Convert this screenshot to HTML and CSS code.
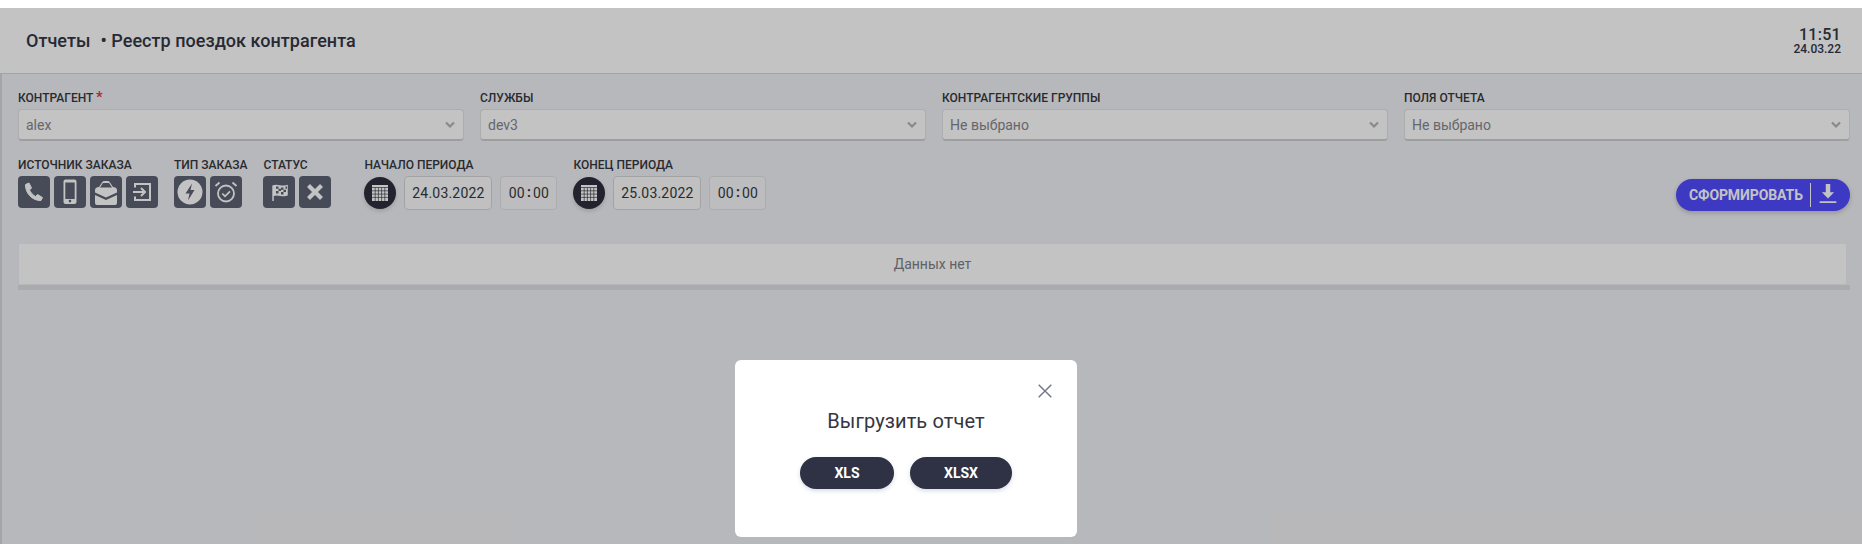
FILE: index.html
```html
<!DOCTYPE html>
<html lang="ru">
<head>
<meta charset="utf-8">
<title>Отчеты</title>
<link rel="stylesheet" href="styles.css">
</head>
<body>
<svg class="defs" width="0" height="0" aria-hidden="true">
  <defs>
    <symbol id="chev" viewBox="0 0 10 8"><path d="M1 1.5 L5 5.5 L9 1.5" fill="none" stroke="currentColor" stroke-width="2.2"/></symbol>
    <symbol id="cal" viewBox="0 0 16 16">
      <path fill="#fff" d="M0 0h16v16H0z"/>
      <path fill="none" stroke="#2d2f3e" stroke-width=".65" d="M3.2 2.500v13.500M6.400 2.500v13.500M9.600 2.500v13.500M12.800 2.500v13.500M0 2.500h16M0 5.800h16M0 9.100h16M0 12.400h16"/>
    </symbol>
  </defs>
</svg>
<div class="app">
  <header class="topbar">
    <h1 class="title"><span class="title-root">Отчеты</span><span class="title-sub">• Реестр поездок контрагента</span></h1>
    <div class="clock"><div class="clock-time">11:51</div><div class="clock-date">24.03.22</div></div>
  </header>
  <main class="main">
    <section class="selects">
      <div class="field"><label class="label">Контрагент <span class="req">*</span></label>
        <div class="select"><span>alex</span><svg class="chev"><use href="#chev"/></svg></div></div>
      <div class="field"><label class="label">Службы</label>
        <div class="select"><span>dev3</span><svg class="chev"><use href="#chev"/></svg></div></div>
      <div class="field"><label class="label">Контрагентские группы</label>
        <div class="select"><span>Не выбрано</span><svg class="chev"><use href="#chev"/></svg></div></div>
      <div class="field"><label class="label">Поля отчета</label>
        <div class="select"><span>Не выбрано</span><svg class="chev"><use href="#chev"/></svg></div></div>
    </section>
    <section class="toolbar">
      <div class="group"><div class="label">Источник заказа</div>
        <div class="tiles">
          <div class="tile"><svg viewBox="0 0 32 32"><path fill="#fff" stroke="#fff" stroke-linejoin="round" d="M7.5 8.5 L11 7 L13.5 12 L11.5 14 C12.5 16.5 15 19 17.5 20.5 L19.5 18.5 L24.5 21.5 L23 24.5 C14.5 25 7 17 7.5 8.5Z"/></svg></div>
          <div class="tile"><svg viewBox="0 0 32 32"><path fill="#fff" fill-rule="evenodd" d="M11.5 3.5h9a2 2 0 0 1 2 2v20.5a2 2 0 0 1-2 2h-9a2 2 0 0 1-2-2V5.500a2 2 0 0 1 2-2zM11.300 6.500v16.500h9.400V6.500zM16 23.800a1.300 1.300 0 1 0 0 2.600 1.300 1.300 0 0 0 0-2.600z"/></svg></div>
          <div class="tile"><svg viewBox="0 0 32 32"><path fill="#fff" d="M5 14c0-2 2-3 4-3l3-4.500c.5-.8 1.200-1.500 2.500-1.500h3c1.300 0 2 .7 2.500 1.500l3 4.500c2 0 4 1 4 3v2.500L16 21.500 5 16.500zM10 11.500h12l-3-4.500h-6zM5 19l11 5 11-5v8a2 2 0 0 1-2 2H7a2 2 0 0 1-2-2z" fill-rule="evenodd"/></svg></div>
          <div class="tile"><svg viewBox="0 0 32 32"><path fill="none" stroke="#fff" stroke-width="2" d="M9 11.500V8h15v16H9v-3.500M7 16h12M15 12l4 4-4 4"/></svg></div>
        </div></div>
      <div class="group"><div class="label">Тип заказа</div>
        <div class="tiles">
          <div class="tile"><svg viewBox="0 0 32 32"><circle cx="16" cy="16" r="12.500" fill="#fff"/><path fill="#5e6273" d="M18 7.500 L11.500 17.500H15.500L14 24.500 20.500 14H16.500Z"/></svg></div>
          <div class="tile"><svg viewBox="0 0 32 32"><g fill="none" stroke="#fff"><circle cx="16" cy="17.500" r="8" stroke-width="1.800"/><path stroke-width="1.800" d="M12.300 17.500l2.700 2.800 5-5"/><path stroke-width="1.800" d="M5.500 10l4-3.500M26.500 10l-4-3.500"/></g></svg></div>
        </div></div>
      <div class="group group-status"><div class="label">Статус</div>
        <div class="tiles">
          <div class="tile"><svg viewBox="0 0 32 32"><path fill="#fff" d="M9.300 9.500c5-2.500 10 1.500 15.500-.8v10.800c-5 2.300-10-1.500-14 .5v5h-1.500z"/><path fill="#5e6273" d="M13 10.500h2.500v2.300H13zM18 11.500h2.500v2.300H18zM15.500 12.800H18v2.300h-2.500zM20.500 13.800H23v2.300h-2.500zM13 15.100h2.500v2.300H13zM18 16.100h2.500v2.300H18zM22.500 10.500h1.500v2.300h-1.500z"/></svg></div>
          <div class="tile"><svg viewBox="0 0 32 32"><path fill="none" stroke="#fff" stroke-width="4.200" d="M9.500 9.500l13 13M22.500 9.500l-13 13"/></svg></div>
        </div></div>
      <div class="group"><div class="label">Начало периода</div>
        <div class="period">
          <div class="cal-btn"><svg class="cal"><use href="#cal"/></svg></div>
          <div class="date">24.03.2022</div>
          <div class="time">00<b>:</b>00</div>
        </div></div>
      <div class="group"><div class="label">Конец периода</div>
        <div class="period">
          <div class="cal-btn"><svg class="cal"><use href="#cal"/></svg></div>
          <div class="date">25.03.2022</div>
          <div class="time">00<b>:</b>00</div>
        </div></div>
      <button class="make" type="button"><span class="make-text">Сформировать</span><svg class="make-icon" viewBox="0 0 18 18"><path fill="#fff" d="M7 0h4v7.500h3.500L9 13 3.500 7.500H7zM1.500 15.500h15V17h-15z"/></svg></button>
    </section>
    <section class="table">
      <div class="table-empty">Данных нет</div>
      <div class="table-foot"></div>
    </section>
  </main>
</div>
<div class="overlay"></div>
<div class="modal">
  <svg class="close" viewBox="0 0 14 14"><path fill="none" stroke="currentColor" stroke-width="1.400" d="M.7.7l12.600 12.600M13.300.7L.7 13.300"/></svg>
  <div class="modal-title">Выгрузить отчет</div>
  <div class="modal-actions">
    <button class="pill pill-xls" type="button">XLS</button>
    <button class="pill pill-xlsx" type="button">XLSX</button>
  </div>
</div>
</body>
</html>
```
FILE: styles.css
```css
* { box-sizing: border-box; }
html, body { margin: 0; height: 100%; }
body {
  background: #fff;
  font-family: Roboto, "Liberation Sans", sans-serif;
  color: #363840;
  overflow: hidden;
  position: relative;
  height: 544px;
}
.defs { position: absolute; }
.app { margin-top: 8px; height: 536px; display: flex; flex-direction: column; background: #f0f1f5; }
.topbar {
  height: 66px;
  flex: none;
  background: #fff;
  border-bottom: 1px solid #d6d6d6;
  display: flex;
  align-items: center;
  justify-content: space-between;
  padding: 0 21px 0 26px;
}
.title { margin: 0; font-size: 18px; font-weight: 500; color: #333644; line-height: 20px; letter-spacing: .04px; }
.title-sub { margin-left: 10px; }
.clock { text-align: right; color: #333644; }
.clock-time { font-size: 16px; font-weight: 500; line-height: 16px; letter-spacing: .3px; }
.clock-date { font-size: 12px; font-weight: 500; line-height: 12px; }
.main { flex: 1; border-left: 2px solid #d8d8d8; padding: 17px 12px 0 16px; }
.label { display: block; font-size: 12px; font-weight: 500; line-height: 14px; text-transform: uppercase; color: #363840; white-space: nowrap; }
.req { color: #d9363a; font-size: 15px; line-height: 10px; }
.selects { display: grid; grid-template-columns: repeat(4, 446px); gap: 16px; }
.select {
  margin-top: 4px;
  height: 32px;
  background: #fff;
  border: 1px solid #e2e2e4;
  border-bottom: 2px solid #cfcfd1;
  border-radius: 4px;
  padding: 0 7px;
  display: flex;
  align-items: center;
  justify-content: space-between;
  font-size: 14px;
  color: #85878e;
}
.chev { width: 10px; height: 8px; color: #b4b4b4; margin-top: 1px; margin-right: 1px; }
.toolbar { display: flex; gap: 16px; margin-top: 17px; height: 85px; }
.group-status { margin-right: 17px; }
.tiles { display: flex; gap: 4px; margin-top: 4px; }
.tile { width: 32px; height: 32px; border-radius: 4px; background: #5e6273; }
.tile svg { display: block; width: 32px; height: 32px; }
.period { display: flex; align-items: flex-start; margin-top: 4px; }
.cal-btn {
  width: 32px; height: 32px; margin-top: 1px; border-radius: 50%;
  background: #2d2f3e; box-shadow: 0 2px 4px rgba(0,0,0,.15);
  display: flex; align-items: center; justify-content: center;
}
.cal { width: 16px; height: 16px; }
.date, .time {
  height: 34px; display: flex; align-items: center; justify-content: center;
  border-radius: 4px; font-size: 14px; color: #363840; letter-spacing: .2px;
}
.date { width: 88px; margin-left: 8px; background: #fbfbfb; border: 1px solid #d6d6d8; }
.time { width: 57px; margin-left: 8px; background: #f7f8fa; border: 1px solid #e0e1e4; }
.time b { font-weight: 700; margin: -3px 2px 0; }
.make {
  margin: 21px 0 0 auto;
  width: 174px; height: 32px; border: 0; border-radius: 16px; background: #524bff;
  box-shadow: 0 2px 5px rgba(0,0,0,.2);
  color: #fff; font: 700 14px/32px Roboto, "Liberation Sans", sans-serif;
  text-transform: uppercase; padding: 0 0 0 13px; display: flex; align-items: center;
  white-space: nowrap;
}
.make-text { padding-right: 7px; border-right: 1px solid #fff; line-height: 24px; letter-spacing: -.1px; }
.make-icon { width: 20px; height: 20px; margin-left: 7px; margin-top: -3px; }
.table-empty {
  margin-right: 3px; height: 42px; background: #fff; border: 1px solid #eef0f6;
  display: flex; align-items: center; justify-content: center;
  font-size: 14px; color: #7d7f85;
}
.table-foot { height: 5px; background: #e0e0e0; }
.overlay { position: absolute; left: 0; right: 0; top: 8px; bottom: 0; background: rgba(0,0,0,.235); }
.modal {
  position: absolute; left: 735px; top: 360px; width: 342px; height: 177px;
  background: #fff; border-radius: 6px;
  padding-top: 47px;
  display: flex; flex-direction: column; align-items: center;
}
.close { position: absolute; top: 24px; right: 25px; width: 14px; height: 14px; color: #6f7485; }
.modal-title { font-size: 20px; line-height: 28px; color: #333644; letter-spacing: .1px; }
.modal-actions { display: flex; gap: 16px; margin-top: 22px; }
.pill {
  height: 32px; border: 0; border-radius: 16px; background: #2f3244; color: #fff;
  font: 700 14px/32px Roboto, "Liberation Sans", sans-serif;
  box-shadow: 0 2px 4px rgba(120,140,170,.3);
  padding: 0;
}
.pill-xls { width: 94px; }
.pill-xlsx { width: 102px; }
```
